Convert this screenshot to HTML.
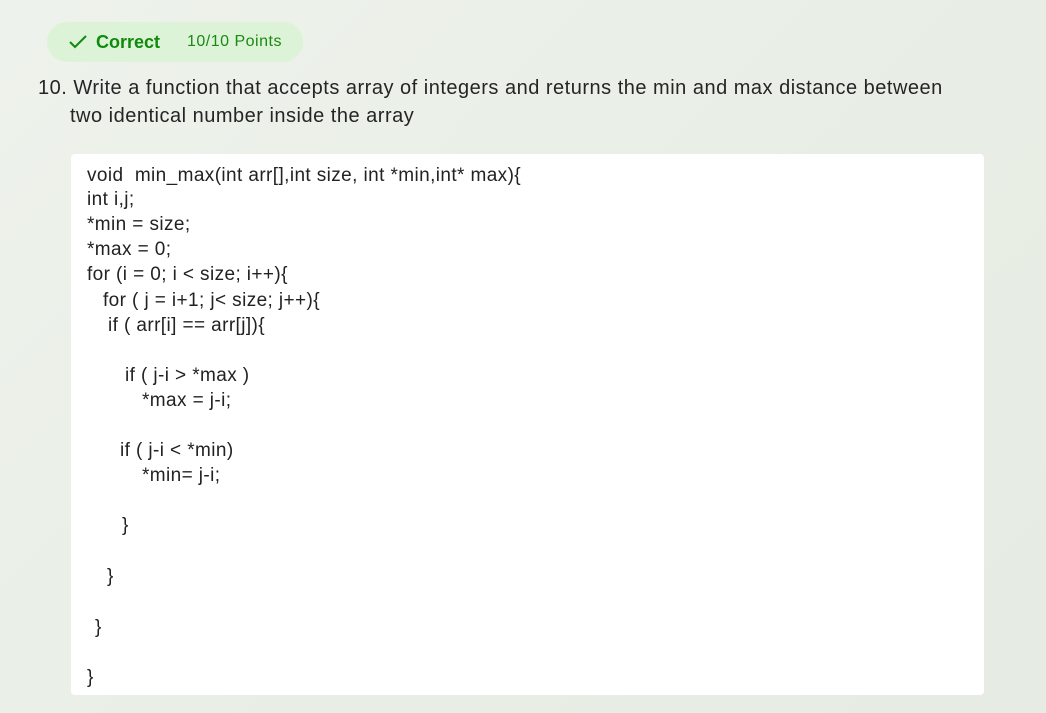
<!DOCTYPE html>
<html><head><style>
body{margin:0;width:1046px;height:713px;overflow:hidden;background:linear-gradient(135deg,#eef2ec 0%,#e8eee5 60%,#e6ece3 100%);font-family:"Liberation Sans",sans-serif;position:relative}
.badge{position:absolute;left:47px;top:22px;width:256px;height:40px;border-radius:20px;background:#dcf3d8}
.badge .ok{position:absolute;left:49px;top:10px;font-size:18px;font-weight:bold;color:#108a0c;white-space:nowrap}
.badge .pts{position:absolute;left:140px;top:11px;font-size:16px;letter-spacing:0.5px;color:#1a8a12;white-space:nowrap}
.q{position:absolute;left:38px;top:74px;font-size:20px;letter-spacing:0.5px;color:#252525;line-height:28px;white-space:nowrap}
.box{position:absolute;left:71px;top:154px;width:913px;height:541px;background:#fff;border-radius:4px}
.l{position:absolute;font-size:19px;letter-spacing:0.4px;color:#222;white-space:pre;line-height:22px}
</style></head><body>
<div class="badge"><svg style="position:absolute;left:21px;top:12px" width="20" height="16" viewBox="0 0 20 16"><path d="M2 8 L7 13 L18 2" fill="none" stroke="#108a0c" stroke-width="2"/></svg><span class="ok">Correct</span><span class="pts">10/10 Points</span></div>
<div class="q">10. Write a function that accepts array of integers and returns the min and max distance between<br><span style="padding-left:32px">two identical number inside the array</span></div>
<div class="box"></div>
<div class="l" style="left:87px;top:165px">void  min_max(int arr[],int size, int *min,int* max){</div>
<div class="l" style="left:87px;top:189px">int i,j;</div>
<div class="l" style="left:87px;top:214px">*min = size;</div>
<div class="l" style="left:87px;top:239px">*max = 0;</div>
<div class="l" style="left:87px;top:264px">for (i = 0; i &lt; size; i++){</div>
<div class="l" style="left:103px;top:290px">for ( j = i+1; j&lt; size; j++){</div>
<div class="l" style="left:108px;top:315px">if ( arr[i] == arr[j]){</div>
<div class="l" style="left:125px;top:365px">if ( j-i &gt; *max )</div>
<div class="l" style="left:142px;top:390px">*max = j-i;</div>
<div class="l" style="left:120px;top:440px">if ( j-i &lt; *min)</div>
<div class="l" style="left:142px;top:465px">*min= j-i;</div>
<div class="l" style="left:122px;top:515px">}</div>
<div class="l" style="left:107px;top:566px">}</div>
<div class="l" style="left:95px;top:617px">}</div>
<div class="l" style="left:87px;top:667px">}</div>
</body></html>
